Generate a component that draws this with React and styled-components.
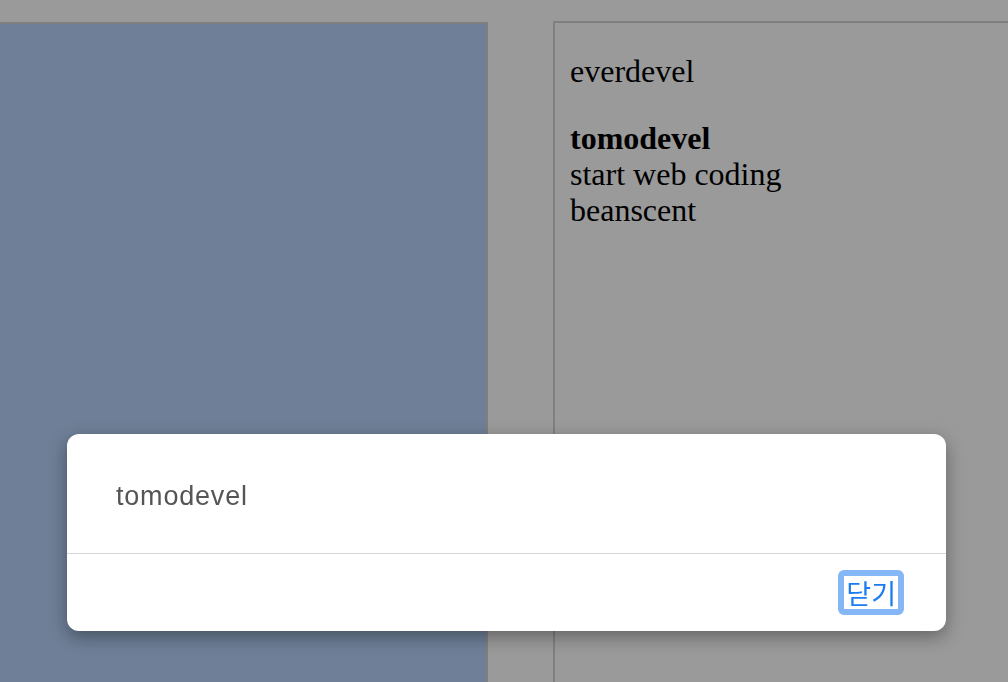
import React from "react";
import styled, { createGlobalStyle } from "styled-components";

const Global = createGlobalStyle`
  html, body {
    margin: 0;
    padding: 0;
    background: #9a9a9a;
    overflow: hidden;
  }
  body {
    width: 1008px;
    height: 682px;
  }
`;

const Page = styled.div`
  display: flex;
  align-items: flex-start;
  width: 1008px;
  height: 682px;
  overflow: hidden;
`;

const LeftPanel = styled.div`
  box-sizing: border-box;
  flex: 0 0 490px;
  margin-left: -2px;
  margin-top: 22px;
  height: 720px;
  background: #6e7f97;
  border: 2px solid #7f7f7f;
`;

const RightPanel = styled.div`
  box-sizing: border-box;
  flex: 0 0 520px;
  margin-left: 65px;
  margin-top: 21px;
  height: 720px;
  padding: 30px 16px 0 15px;
  border: 2px solid #808080;
  font-family: "Liberation Serif", "Times New Roman", serif;
  font-size: 32px;
  line-height: 36px;
  color: #000;
`;

const Line = styled.div`
  font-weight: ${(p) => (p.$bold ? 700 : 400)};
  margin-top: ${(p) => (p.$gap ? "31px" : "0")};
  white-space: nowrap;
`;

const Modal = styled.div`
  position: fixed;
  left: 67px;
  top: 434px;
  width: 879px;
  height: 197px;
  background: #fff;
  border-radius: 12px;
  box-shadow: 0 6px 18px rgba(0, 0, 0, 0.35);
  display: flex;
  flex-direction: column;
  overflow: hidden;
`;

const ModalBody = styled.div`
  box-sizing: border-box;
  height: 120px;
  padding: 47px 49px 0;
  font-family: "Liberation Sans", Arial, sans-serif;
  font-size: 27px;
  letter-spacing: 0.8px;
  color: #555;
  border-bottom: 1px solid #d6d6d6;
`;

const ModalFooter = styled.div`
  flex: 1;
  display: flex;
  justify-content: flex-end;
  align-items: center;
  padding-right: 42px;
`;

const CloseButton = styled.button`
  box-sizing: border-box;
  height: 45px;
  padding: 0 2px;
  border: 6px solid #85b7f6;
  border-radius: 6px;
  background: #fff;
  color: #1b7cf2;
  font-family: "Noto Sans CJK KR", sans-serif;
  font-size: 27px;
  line-height: 32px;
  cursor: pointer;
  outline: none;
`;

export default function App() {
  return (
    <>
      <Global />
      <Page>
        <LeftPanel />
        <RightPanel>
          <Line>everdevel</Line>
          <Line $gap $bold>
            tomodevel
          </Line>
          <Line>start web coding</Line>
          <Line>beanscent</Line>
        </RightPanel>
      </Page>
      <Modal>
        <ModalBody>tomodevel</ModalBody>
        <ModalFooter>
          <CloseButton>닫기</CloseButton>
        </ModalFooter>
      </Modal>
    </>
  );
}
